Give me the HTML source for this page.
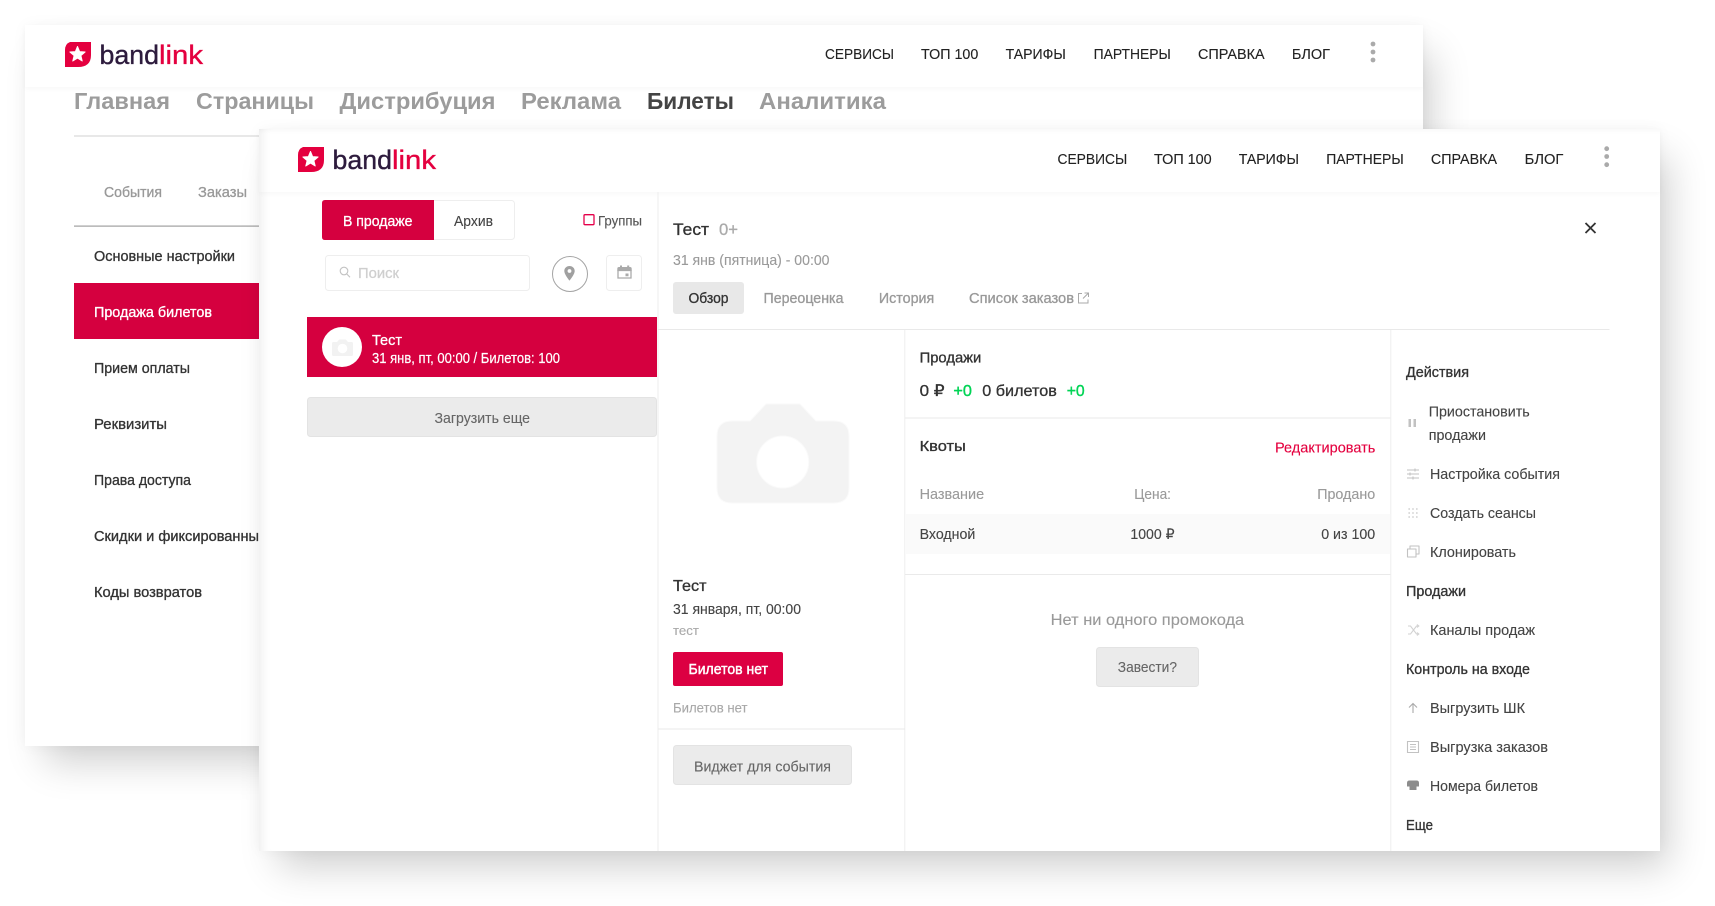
<!DOCTYPE html>
<html lang="ru">
<head>
<meta charset="utf-8">
<title>Bandlink</title>
<style>
html,body{margin:0;padding:0;background:#fff;width:1715px;height:906px;overflow:hidden}
.card{position:absolute;background:#fff;box-shadow:0 0 14px rgba(0,0,0,.04),14px 22px 36px -6px rgba(0,0,0,.19)}
.front{box-shadow:0 0 14px rgba(0,0,0,.04),14px 22px 36px -6px rgba(0,0,0,.19),inset 11px 0 10px -8px rgba(0,0,0,.07),inset 0 6px 6px -5px rgba(0,0,0,.04)}
.hd{position:absolute;left:0;right:0;top:0;height:62px;box-shadow:0 2px 5px rgba(0,0,0,.03)}
svg.l{position:absolute;left:0;top:0;filter:blur(.3px)}
text{font-family:"Liberation Sans",sans-serif;font-size:14.5px;fill:#444;stroke:#444;stroke-width:.12px}
.n{fill:#222;stroke:#222;font-size:14.5px}
.m{stroke:#333;stroke-width:.32px;fill:#333}
.g{fill:#9a9a9a;stroke:#9a9a9a}
.gm{fill:#999;stroke:#999;stroke-width:.3px}
.wm{fill:#fff;stroke:#fff;stroke-width:.3px}
.big{font-size:23px;font-weight:bold;fill:#9c9c9c;stroke:none}
.logo{font-size:27px;fill:#2d1b3d;stroke:#2d1b3d;stroke-width:.35px}
.logo2{font-size:27px;fill:#e4003f;stroke:#e4003f;stroke-width:.35px}
.ic{fill:none;stroke:#c2c2c2;stroke-width:1.1}
</style>
</head>
<body>

<div class="card" style="left:25px;top:25px;width:1398px;height:721px"><div class="hd"></div></div>
<svg class="l" width="1715" height="906" viewBox="0 0 1715 906">
  <path d="M70 42H91V55Q91 67 78 67H65V50Q65 44 70 42Z" fill="#e4003f"/>
  <polygon transform="translate(77.5 54.5)" points="0,-8 2.1,-2.9 7.6,-2.5 3.4,1.1 4.7,6.5 0,3.6 -4.7,6.5 -3.4,1.1 -7.6,-2.5 -2.1,-2.9" fill="#fff" stroke="#fff" stroke-linejoin="round"/>
  <text class="logo" x="99.5" y="64" textLength="59.5" lengthAdjust="spacingAndGlyphs">band</text>
  <text class="logo2" x="159" y="64" textLength="44" lengthAdjust="spacingAndGlyphs">link</text>

  <text class="n" x="825" y="59" textLength="69" lengthAdjust="spacingAndGlyphs">СЕРВИСЫ</text>
  <text class="n" x="921" y="59" textLength="57.3" lengthAdjust="spacingAndGlyphs">ТОП 100</text>
  <text class="n" x="1005.6" y="59" textLength="60.2" lengthAdjust="spacingAndGlyphs">ТАРИФЫ</text>
  <text class="n" x="1093.6" y="59" textLength="77.2" lengthAdjust="spacingAndGlyphs">ПАРТНЕРЫ</text>
  <text class="n" x="1198" y="59" textLength="66.6" lengthAdjust="spacingAndGlyphs">СПРАВКА</text>
  <text class="n" x="1291.9" y="59" textLength="38.1" lengthAdjust="spacingAndGlyphs">БЛОГ</text>
  <circle cx="1373" cy="44" r="2.4" fill="#aaa"/><circle cx="1373" cy="52" r="2.4" fill="#aaa"/><circle cx="1373" cy="60" r="2.4" fill="#aaa"/>

  <text class="big" x="74" y="109" textLength="96" lengthAdjust="spacingAndGlyphs">Главная</text>
  <text class="big" x="196" y="109" textLength="118" lengthAdjust="spacingAndGlyphs">Страницы</text>
  <text class="big" x="339.5" y="109" textLength="156" lengthAdjust="spacingAndGlyphs">Дистрибуция</text>
  <text class="big" x="521" y="109" textLength="100" lengthAdjust="spacingAndGlyphs">Реклама</text>
  <text class="big" x="647" y="109" textLength="87" lengthAdjust="spacingAndGlyphs" style="fill:#444">Билеты</text>
  <text class="big" x="759" y="109" textLength="127" lengthAdjust="spacingAndGlyphs">Аналитика</text>
  <rect x="74" y="135" width="185" height="2" fill="#e8e8e8"/>

  <text class="gm" x="104" y="197" textLength="58" lengthAdjust="spacingAndGlyphs">События</text>
  <text class="gm" x="198" y="197" textLength="49" lengthAdjust="spacingAndGlyphs">Заказы</text>
  <rect x="74" y="225.5" width="185" height="1.2" fill="#a0a0a0"/>

  <text class="m" x="94" y="261" textLength="141" lengthAdjust="spacingAndGlyphs">Основные настройки</text>
  <rect x="74" y="283" width="185" height="56" fill="#d5003f"/>
  <text class="wm" x="94" y="317" textLength="118" lengthAdjust="spacingAndGlyphs">Продажа билетов</text>
  <text class="m" x="94" y="373" textLength="96" lengthAdjust="spacingAndGlyphs">Прием оплаты</text>
  <text class="m" x="94" y="429" textLength="73" lengthAdjust="spacingAndGlyphs">Реквизиты</text>
  <text class="m" x="94" y="485" textLength="97" lengthAdjust="spacingAndGlyphs">Права доступа</text>
  <text class="m" x="94" y="541" textLength="165" lengthAdjust="spacingAndGlyphs">Скидки и фиксированны</text>
  <text class="m" x="94" y="597" textLength="108" lengthAdjust="spacingAndGlyphs">Коды возвратов</text>
</svg>

<div class="card front" style="left:259px;top:129px;width:1401px;height:722px"><div class="hd" style="height:63px"></div></div>
<svg class="l" width="1715" height="906" viewBox="0 0 1715 906">
  <g transform="translate(233 105)">
    <path d="M70 42H91V55Q91 67 78 67H65V50Q65 44 70 42Z" fill="#e4003f"/>
    <polygon transform="translate(77.5 54.5)" points="0,-8 2.1,-2.9 7.6,-2.5 3.4,1.1 4.7,6.5 0,3.6 -4.7,6.5 -3.4,1.1 -7.6,-2.5 -2.1,-2.9" fill="#fff" stroke="#fff" stroke-linejoin="round"/>
    <text class="logo" x="99.5" y="64" textLength="59.5" lengthAdjust="spacingAndGlyphs">band</text>
    <text class="logo2" x="159" y="64" textLength="44" lengthAdjust="spacingAndGlyphs">link</text>
  </g>
  <text class="n" x="1057.5" y="164" textLength="69.7" lengthAdjust="spacingAndGlyphs">СЕРВИСЫ</text>
  <text class="n" x="1154" y="164" textLength="57.7" lengthAdjust="spacingAndGlyphs">ТОП 100</text>
  <text class="n" x="1238.7" y="164" textLength="60.3" lengthAdjust="spacingAndGlyphs">ТАРИФЫ</text>
  <text class="n" x="1326.2" y="164" textLength="77.5" lengthAdjust="spacingAndGlyphs">ПАРТНЕРЫ</text>
  <text class="n" x="1430.9" y="164" textLength="66.1" lengthAdjust="spacingAndGlyphs">СПРАВКА</text>
  <text class="n" x="1524.7" y="164" textLength="38.7" lengthAdjust="spacingAndGlyphs">БЛОГ</text>
  <circle cx="1606.7" cy="148.7" r="2.4" fill="#aaa"/><circle cx="1606.7" cy="156.5" r="2.4" fill="#aaa"/><circle cx="1606.7" cy="164.7" r="2.4" fill="#aaa"/>

  <!-- lines -->
  <rect x="657.5" y="192" width="1" height="659" fill="#eee"/>
  <rect x="658" y="329" width="951.5" height="1" fill="#e9e9e9"/>
  <rect x="904.3" y="330" width="1" height="521" fill="#eee"/>
  <rect x="1390.3" y="330" width="1" height="521" fill="#eee"/>

  <!-- left column -->
  <rect x="322.5" y="200.5" width="192" height="39" rx="3" fill="#fff" stroke="#eee"/>
  <path d="M325 200H434V240H325Q322 240 322 237V203Q322 200 325 200Z" fill="#d5003f"/>
  <text class="wm" x="343" y="226" textLength="69.5" lengthAdjust="spacingAndGlyphs">В продаже</text>
  <text x="454" y="226" textLength="39" lengthAdjust="spacingAndGlyphs">Архив</text>
  <rect x="584" y="214.7" width="10" height="10" rx="1" fill="#fff" stroke="#e4004a" stroke-width="1.3"/>
  <text x="598" y="225.5" textLength="44" lengthAdjust="spacingAndGlyphs" style="font-size:13.5px;fill:#555;stroke:#555">Группы</text>

  <rect x="325.5" y="255.5" width="204" height="35" rx="3" fill="#fff" stroke="#eee"/>
  <circle cx="344" cy="271" r="3.8" class="ic"/><path d="M346.8 274L350 277.3" class="ic"/>
  <text x="358" y="278" textLength="41" lengthAdjust="spacingAndGlyphs" style="fill:#cfcfcf;stroke:#cfcfcf;stroke-width:.25px">Поиск</text>
  <circle cx="570" cy="274" r="17.5" fill="#fff" stroke="#a4a4a4" stroke-width="1"/>
  <path d="M569.5 266c-3 0-5.2 2.2-5.2 5 0 3.5 5.2 9.7 5.2 9.7s5.2-6.2 5.2-9.700c0-2.800-2.200-5-5.200-5zm0 6.900a1.900 1.900 0 1 1 0-3.800 1.900 1.900 0 0 1 0 3.800z" fill="#a0a0a0"/>
  <rect x="606.5" y="255.5" width="35" height="35" rx="3" fill="#fff" stroke="#eee"/>
  <path d="M618 270.5h13v7.5h-13z" fill="none" stroke="#aaa" stroke-width="1.3"/>
  <path d="M619 267h11q1.7 0 1.7 1.7V271h-14.400v-2.300q0-1.700 1.700-1.700zM620 265.500h2v2h-2zM627.200 265.500h2v2h-2zM625.500 273.500h3v2.800h-3z" fill="#aaa"/>

  <rect x="307" y="317" width="350" height="60" fill="#d5003f"/>
  <circle cx="342" cy="347" r="20" fill="#fff"/>
  <path d="M332 343.500q0-1.500 1.500-1.500h3.500l2.300-2.500h6.400l2.300 2.500h3.500q1.500 0 1.500 1.500v11q0 1.500-1.500 1.500h-18q-1.500 0-1.500-1.500z" fill="#f2f2f2"/><circle cx="342.500" cy="348.500" r="4.800" fill="#fff"/>
  <text class="wm" x="372" y="345" textLength="30" lengthAdjust="spacingAndGlyphs">Тест</text>
  <text class="wm" x="372" y="363" textLength="188" lengthAdjust="spacingAndGlyphs" style="stroke-width:.2px">31 янв, пт, 00:00 / Билетов: 100</text>

  <rect x="307.500" y="397.500" width="349" height="39" rx="3" fill="#ebebeb" stroke="#e3e3e3"/>
  <text x="434.500" y="423" textLength="95.500" lengthAdjust="spacingAndGlyphs" style="fill:#666;stroke:#666">Загрузить еще</text>

  <!-- detail head -->
  <text class="m" x="673" y="235" textLength="36" lengthAdjust="spacingAndGlyphs" style="font-size:17px">Тест</text>
  <text x="719" y="235" textLength="19" lengthAdjust="spacingAndGlyphs" style="font-size:17px;fill:#aaa;stroke:#aaa;stroke-width:.3px">0+</text>
  <text class="g" x="673" y="265" textLength="156.500" lengthAdjust="spacingAndGlyphs">31 янв (пятница) - 00:00</text>
  <path d="M1585.500 223L1595.500 233M1595.500 223L1585.500 233" stroke="#333" stroke-width="1.800" fill="none"/>

  <rect x="673" y="282" width="71" height="32" rx="3" fill="#e8e8e8"/>
  <text class="m" x="688.500" y="303" textLength="40" lengthAdjust="spacingAndGlyphs">Обзор</text>
  <text class="gm" x="763.500" y="303" textLength="80" lengthAdjust="spacingAndGlyphs">Переоценка</text>
  <text class="gm" x="878.900" y="303" textLength="55.300" lengthAdjust="spacingAndGlyphs">История</text>
  <text class="gm" x="969" y="303" textLength="105" lengthAdjust="spacingAndGlyphs">Список заказов</text>
  <path d="M1082 293.500h-3.500v9.500h9.500v-3.500M1083 298.500l5-5M1084.500 293h4v4" fill="none" stroke="#a8a8a8" stroke-width="1"/>

  <!-- camera -->
  <path d="M732 421H750L766 404H800L816 421H834Q849 421 849 436V488Q849 503 834 503H732Q717 503 717 488V436Q717 421 732 421Z" fill="#f3f3f3" stroke="#fafafa"/>
  <circle cx="782.700" cy="462" r="26" fill="#fff" stroke="#fafafa"/>

  <text class="m" x="673" y="591" textLength="33.500" lengthAdjust="spacingAndGlyphs" style="font-size:16px">Тест</text>
  <text x="673" y="614" textLength="128" lengthAdjust="spacingAndGlyphs">31 января, пт, 00:00</text>
  <text x="673" y="635" textLength="26" lengthAdjust="spacingAndGlyphs" style="font-size:12.500px;fill:#aaa;stroke:#aaa">тест</text>
  <rect x="673" y="652" width="110" height="34" rx="2" fill="#dc0042"/>
  <text class="wm" x="688.500" y="674" textLength="79.500" lengthAdjust="spacingAndGlyphs" style="stroke-width:.45px">Билетов нет</text>
  <text x="673" y="712.500" textLength="74.500" lengthAdjust="spacingAndGlyphs" style="font-size:13.500px;fill:#a8a8a8;stroke:#a8a8a8">Билетов нет</text>
  <rect x="658" y="728.500" width="247" height="1" fill="#eaeaea"/>
  <rect x="673.500" y="745.500" width="178" height="39" rx="3" fill="#ebebeb" stroke="#e3e3e3"/>
  <text x="694" y="771.500" textLength="137" lengthAdjust="spacingAndGlyphs" style="fill:#666;stroke:#666">Виджет для события</text>

  <!-- middle -->
  <text class="m" x="919.600" y="362.500" textLength="61.700" lengthAdjust="spacingAndGlyphs">Продажи</text>
  <text class="m" x="919.600" y="396" textLength="25" lengthAdjust="spacingAndGlyphs" style="font-size:16px">0 ₽</text>
  <text x="953.400" y="396" textLength="18.500" lengthAdjust="spacingAndGlyphs" style="font-size:16px;fill:#00d455;stroke:#00d455;stroke-width:.4px">+0</text>
  <text class="m" x="982.300" y="396" textLength="74.500" lengthAdjust="spacingAndGlyphs" style="font-size:16px">0 билетов</text>
  <text x="1066.700" y="396" textLength="18" lengthAdjust="spacingAndGlyphs" style="font-size:16px;fill:#00d455;stroke:#00d455;stroke-width:.4px">+0</text>
  <rect x="905" y="417.500" width="485.500" height="1" fill="#eaeaea"/>

  <text class="m" x="919.600" y="451" textLength="46.200" lengthAdjust="spacingAndGlyphs">Квоты</text>
  <text x="1275" y="452.500" textLength="100.300" lengthAdjust="spacingAndGlyphs" style="fill:#e4003f;stroke:#e4003f">Редактировать</text>

  <text class="g" x="919.600" y="499" textLength="64.500" lengthAdjust="spacingAndGlyphs">Название</text>
  <text class="g" x="1134.300" y="499" textLength="36.700" lengthAdjust="spacingAndGlyphs">Цена:</text>
  <text class="g" x="1317.200" y="499" textLength="58" lengthAdjust="spacingAndGlyphs">Продано</text>
  <rect x="905" y="514" width="485.300" height="40" fill="#fafafa"/>
  <text x="919.600" y="539" textLength="55.700" lengthAdjust="spacingAndGlyphs">Входной</text>
  <text x="1130.400" y="539" textLength="44.200" lengthAdjust="spacingAndGlyphs">1000 ₽</text>
  <text x="1321.200" y="539" textLength="54" lengthAdjust="spacingAndGlyphs">0 из 100</text>
  <rect x="905" y="574" width="485.500" height="1" fill="#eaeaea"/>

  <text x="1050.700" y="625" textLength="193.500" lengthAdjust="spacingAndGlyphs" style="font-size:16px;fill:#999;stroke:#999">Нет ни одного промокода</text>
  <rect x="1096.500" y="647.500" width="102" height="39" rx="3" fill="#ebebeb" stroke="#e3e3e3"/>
  <text x="1117.800" y="672" textLength="59.200" lengthAdjust="spacingAndGlyphs" style="fill:#666;stroke:#666">Завести?</text>

  <!-- right -->
  <text class="m" x="1406" y="377" textLength="63" lengthAdjust="spacingAndGlyphs">Действия</text>
  <text x="1428.700" y="416.500" textLength="101" lengthAdjust="spacingAndGlyphs">Приостановить</text>
  <text x="1428.700" y="440" textLength="57.300" lengthAdjust="spacingAndGlyphs">продажи</text>
  <path d="M1408.500 419h2.500v8h-2.500zM1413.500 419h2.500v8h-2.500z" fill="#c2c2c2"/>

  <text x="1430" y="479" textLength="130" lengthAdjust="spacingAndGlyphs">Настройка события</text>
  <path d="M1407 470h12M1407 474h12M1407 478h12M1415 468.500v3M1410 472.500v3M1413 476.500v3" class="ic"/>

  <text x="1430" y="518" textLength="106" lengthAdjust="spacingAndGlyphs">Создать сеансы</text>
  <path d="M1408.500 509h9M1408.500 513h9M1408.500 517h9" fill="none" stroke="#bbb" stroke-width="1.300" stroke-dasharray="1.300 2.550"/>

  <text x="1430" y="557" textLength="86" lengthAdjust="spacingAndGlyphs">Клонировать</text>
  <path d="M1407.500 549h8.500v8h-8.500zM1410 549v-3h9v8h-3" class="ic" stroke-linejoin="round"/>

  <text class="m" x="1406" y="596" textLength="60" lengthAdjust="spacingAndGlyphs">Продажи</text>

  <text x="1430" y="635" textLength="105" lengthAdjust="spacingAndGlyphs">Каналы продаж</text>
  <path d="M1408 626h2.500l6 8h2M1408 634h2.500l6-8h2M1417 624.500l1.800 1.500-1.800 1.500M1417 632.500l1.800 1.500-1.800 1.500" style="fill:none;stroke:#d2d2d2;stroke-width:1.100"/>

  <text class="m" x="1406" y="674" textLength="124" lengthAdjust="spacingAndGlyphs">Контроль на входе</text>

  <text x="1430" y="713" textLength="95" lengthAdjust="spacingAndGlyphs">Выгрузить ШК</text>
  <path d="M1413 713v-9.500M1409 707.500l4-4 4 4" fill="none" stroke="#aaa" stroke-width="1.100"/>

  <text x="1430" y="752" textLength="118" lengthAdjust="spacingAndGlyphs">Выгрузка заказов</text>
  <path d="M1407.500 741.500h11v11h-11zM1410 744.500h6M1410 747h6M1410 749.500h6" class="ic"/>

  <text x="1430" y="791" textLength="108" lengthAdjust="spacingAndGlyphs">Номера билетов</text>
  <path d="M1409.500 780.500h7q2.500 0 2.500 2.500v3.500h-2.500v3.500h-7v-3.500h-2.500v-3.500q0-2.500 2.500-2.500z" fill="#8c8c8c"/>

  <text class="m" x="1406" y="830" textLength="27" lengthAdjust="spacingAndGlyphs">Еще</text>
</svg>

</body>
</html>
